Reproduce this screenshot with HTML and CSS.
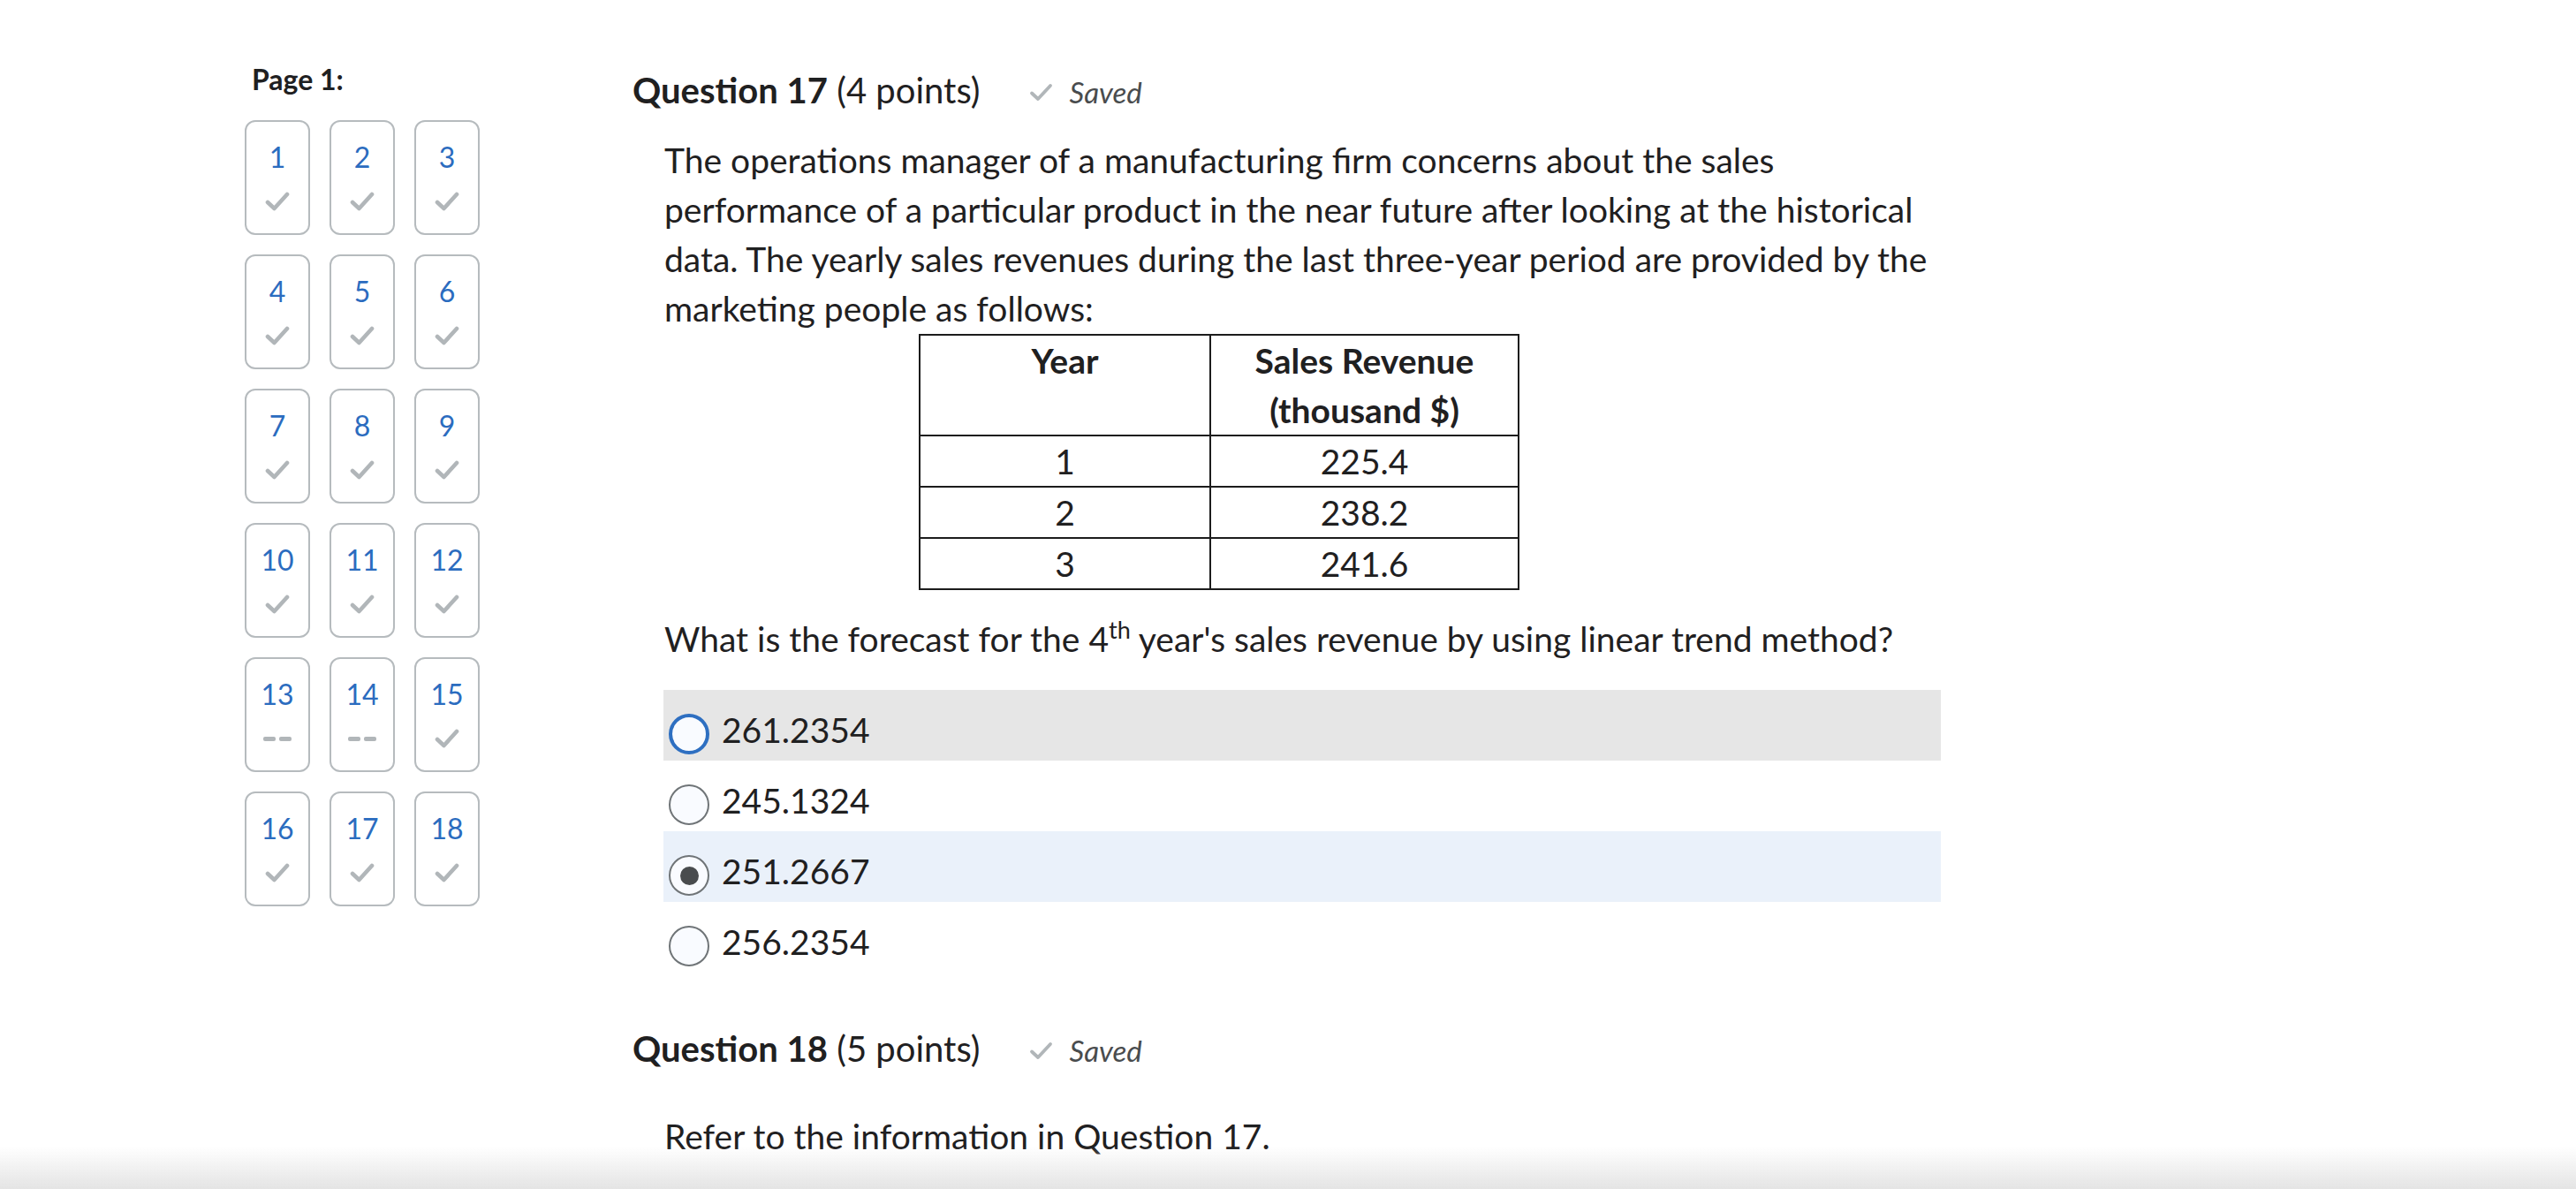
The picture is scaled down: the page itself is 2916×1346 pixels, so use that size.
FILE: index.html
```html
<!DOCTYPE html>
<html lang="en">
<head>
<meta charset="utf-8">
<title>Quiz</title>
<link rel="stylesheet" href="styles.css">
</head>
<body>
<div class="page">
  <aside class="sidebar">
    <h2 class="page-label">Page 1:</h2>
    <div class="tiles">
      <a class="tile"><span class="num">1</span><svg class="tick" viewBox="0 0 28 22"><path d="M3 12 L10.5 19 L25 3"/></svg></a>
      <a class="tile"><span class="num">2</span><svg class="tick" viewBox="0 0 28 22"><path d="M3 12 L10.5 19 L25 3"/></svg></a>
      <a class="tile"><span class="num">3</span><svg class="tick" viewBox="0 0 28 22"><path d="M3 12 L10.5 19 L25 3"/></svg></a>
      <a class="tile"><span class="num">4</span><svg class="tick" viewBox="0 0 28 22"><path d="M3 12 L10.5 19 L25 3"/></svg></a>
      <a class="tile"><span class="num">5</span><svg class="tick" viewBox="0 0 28 22"><path d="M3 12 L10.5 19 L25 3"/></svg></a>
      <a class="tile"><span class="num">6</span><svg class="tick" viewBox="0 0 28 22"><path d="M3 12 L10.5 19 L25 3"/></svg></a>
      <a class="tile"><span class="num">7</span><svg class="tick" viewBox="0 0 28 22"><path d="M3 12 L10.5 19 L25 3"/></svg></a>
      <a class="tile"><span class="num">8</span><svg class="tick" viewBox="0 0 28 22"><path d="M3 12 L10.5 19 L25 3"/></svg></a>
      <a class="tile"><span class="num">9</span><svg class="tick" viewBox="0 0 28 22"><path d="M3 12 L10.5 19 L25 3"/></svg></a>
      <a class="tile"><span class="num">10</span><svg class="tick" viewBox="0 0 28 22"><path d="M3 12 L10.5 19 L25 3"/></svg></a>
      <a class="tile"><span class="num">11</span><svg class="tick" viewBox="0 0 28 22"><path d="M3 12 L10.5 19 L25 3"/></svg></a>
      <a class="tile"><span class="num">12</span><svg class="tick" viewBox="0 0 28 22"><path d="M3 12 L10.5 19 L25 3"/></svg></a>
      <a class="tile"><span class="num">13</span><span class="dashes"><i></i><i></i></span></a>
      <a class="tile"><span class="num">14</span><span class="dashes"><i></i><i></i></span></a>
      <a class="tile"><span class="num">15</span><svg class="tick" viewBox="0 0 28 22"><path d="M3 12 L10.5 19 L25 3"/></svg></a>
      <a class="tile"><span class="num">16</span><svg class="tick" viewBox="0 0 28 22"><path d="M3 12 L10.5 19 L25 3"/></svg></a>
      <a class="tile"><span class="num">17</span><svg class="tick" viewBox="0 0 28 22"><path d="M3 12 L10.5 19 L25 3"/></svg></a>
      <a class="tile"><span class="num">18</span><svg class="tick" viewBox="0 0 28 22"><path d="M3 12 L10.5 19 L25 3"/></svg></a>
    </div>
  </aside>

  <main class="questions">
    <section class="question">
      <h3 class="q-head"><strong>Question 17</strong>&nbsp;(4 points)<span class="saved"><svg class="saved-tick" viewBox="0 0 27 21"><path d="M3 11.5 L10 18 L24 3"/></svg><em>Saved</em></span></h3>
      <div class="q-body">
        <p class="q-text">The operations manager of a manufacturing firm concerns about the sales performance of a particular product in the near future after looking at the historical data. The yearly sales revenues during the last three-year period are provided by the marketing people as follows:</p>
        <table class="data">
          <thead>
            <tr><th class="c1">Year</th><th>Sales Revenue<br>(thousand $)</th></tr>
          </thead>
          <tbody>
            <tr><td>1</td><td>225.4</td></tr>
            <tr><td>2</td><td>238.2</td></tr>
            <tr><td>3</td><td>241.6</td></tr>
          </tbody>
        </table>
        <p class="q-ask">What is the forecast for the 4<sup>th</sup> year's sales revenue by using linear trend method?</p>
      </div>
      <div class="options">
        <label class="option hover"><span class="radio focus"></span><span class="opt-text">261.2354</span></label>
        <label class="option"><span class="radio"></span><span class="opt-text">245.1324</span></label>
        <label class="option selected"><span class="radio checked"></span><span class="opt-text">251.2667</span></label>
        <label class="option"><span class="radio"></span><span class="opt-text">256.2354</span></label>
      </div>
    </section>

    <section class="question q18">
      <h3 class="q-head"><strong>Question 18</strong>&nbsp;(5 points)<span class="saved"><svg class="saved-tick" viewBox="0 0 27 21"><path d="M3 11.5 L10 18 L24 3"/></svg><em>Saved</em></span></h3>
      <div class="q-body">
        <p class="q-refer">Refer to the information in Question 17.</p>
      </div>
    </section>
  </main>
</div>
<div class="bottom-shade"></div>
</body>
</html>
```

FILE: styles.css
```css
html, body {
  margin: 0;
  padding: 0;
  background: #ffffff;
}

body {
  font-family: Lato, "Noto Sans", sans-serif;
  color: #1f2021;
  overflow: hidden;
  height: 1346px;
}

.page {
  display: flex;
  align-items: flex-start;
  padding-left: 277px;
}

/* Sidebar */
.sidebar {
  width: 439px;
  flex: none;
  margin-top: 70px;
}

.page-label {
  margin: 0 0 26px 0;
  padding-left: 8px;
  font-size: 32px;
  line-height: 40px;
  font-weight: 700;
  color: #1f2021;
}

.tiles {
  display: grid;
  grid-template-columns: repeat(3, 74px);
  grid-auto-rows: 130px;
  column-gap: 22px;
  row-gap: 22px;
}

.tile {
  box-sizing: border-box;
  border: 2px solid #b6bbbe;
  border-radius: 12px;
  display: flex;
  flex-direction: column;
  align-items: center;
  padding-top: 20px;
  background: #fff;
}

.num {
  font-size: 32px;
  line-height: 40px;
  color: #2b6cbf;
}

.tick {
  width: 28px;
  height: 22px;
  margin-top: 19px;
  fill: none;
  stroke: #b1b6b9;
  stroke-width: 4.6;
  stroke-linecap: round;
  stroke-linejoin: round;
}

.dashes {
  display: flex;
  gap: 4px;
  margin-top: 28px;
}

.dashes i {
  display: block;
  width: 14px;
  height: 5px;
  border-radius: 2px;
  background: #b1b6b9;
}

/* Questions */
.questions {
  flex: none;
  width: 1600px;
  margin-top: 78px;
}

.q-head {
  margin: 0;
  font-size: 40px;
  line-height: 48px;
  font-weight: 400;
  color: #1f2021;
  display: flex;
  align-items: baseline;
  white-space: nowrap;
}

.q-head strong {
  font-weight: 700;
}

.saved {
  display: inline-flex;
  align-items: baseline;
  margin-left: 55px;
  font-size: 33px;
  color: #494c4e;
}

.saved em {
  font-style: italic;
}

.saved-tick {
  width: 27px;
  height: 21px;
  margin-right: 19px;
  align-self: center;
  fill: none;
  stroke: #b1b6b9;
  stroke-width: 3.8;
  stroke-linecap: round;
  stroke-linejoin: round;
}

.q-body {
  padding-left: 36px;
  font-size: 39px;
  line-height: 56px;
}

.q-text {
  margin: 25px 0 0 0;
  width: 1448px;
}

.data {
  margin: 1px 0 0 288px;
  border-collapse: collapse;
  width: 680px;
  border: 2px solid #1c1c1c;
}

.data th,
.data td {
  border: 2px solid #1c1c1c;
  padding: 0;
  text-align: center;
  vertical-align: top;
  line-height: 56px;
  font-size: 39px;
}

.data th {
  font-weight: 700;
}

.data .c1 {
  width: 327px;
}

.q-ask {
  margin: 27px 0 0 0;
}

.q-ask sup {
  font-size: 27px;
  line-height: 0;
  vertical-align: 15px;
}

.options {
  margin: 30px 0 0 35px;
  width: 1446px;
}

.option {
  box-sizing: border-box;
  height: 80px;
  display: flex;
  align-items: flex-start;
  padding: 17px 0 0 6px;
  font-size: 39px;
  line-height: 56px;
}

.option.hover {
  background: #e6e6e6;
}

.option.selected {
  background: #eaf1fa;
}

.radio {
  box-sizing: border-box;
  flex: none;
  width: 46px;
  height: 46px;
  margin-top: 10px;
  margin-right: 14px;
  border-radius: 50%;
  border: 2px solid #6f7477;
  background: #f9fbff;
  display: flex;
  align-items: center;
  justify-content: center;
}

.radio.focus {
  border: 4px solid #2e6fc1;
}

.radio.checked::after {
  content: "";
  width: 21px;
  height: 21px;
  border-radius: 50%;
  background: #494c4e;
}

.q18 {
  margin-top: 62px;
}

.q-refer {
  margin: 45px 0 0 0;
}

.bottom-shade {
  position: fixed;
  left: 0;
  right: 0;
  bottom: 0;
  height: 48px;
  background: linear-gradient(to bottom, rgba(230, 230, 230, 0), rgba(228, 228, 228, 1));
  pointer-events: none;
}
```
